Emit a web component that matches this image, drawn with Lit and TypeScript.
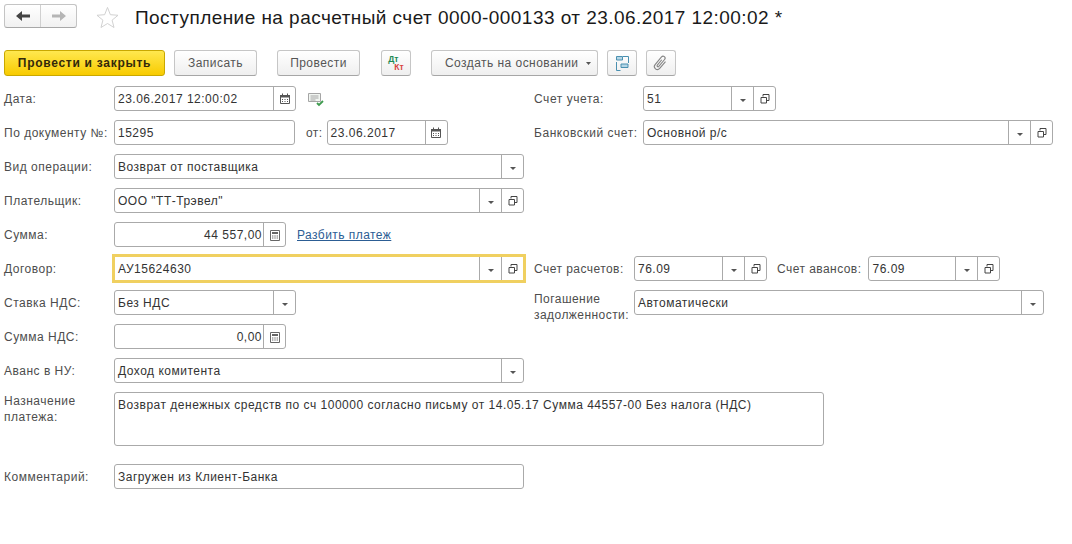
import { LitElement, html, css, svg } from "lit";
import { customElement, property } from "lit/decorators.js";

const ICONS: Record<string, unknown> = {
  drop: svg`<path d="M7 10h6l-3 3z" fill="#555"/>`,
  open: svg`<path d="M8 7.500V5.500h6v6h-2.500M6 8.500h5.500v5.500H6z" fill="none" stroke="#444" stroke-width="1"/>`,
  cal: svg`<path d="M5.500 6.500h9v8h-9z" fill="none" stroke="#555"/><path d="M5 6h10v2.500H5z" fill="#555"/><path d="M7 10h1v1H7zM9.500 10h1v1h-1zM12 10h1v1h-1zM7 12h1v1H7zM9.500 12h1v1h-1zM12 12h1v1h-1z" fill="#555"/><path d="M7 4.500h1v2H7zM12 4.500h1v2h-1z" fill="#555"/>`,
  calc: svg`<path d="M5.500 5.500h9v10h-9z" fill="none" stroke="#666"/><path d="M7 7h6v2H7z" fill="#666"/><path d="M7 10.500h1.400v1H7zM9.300 10.500h1.400v1H9.300zM11.600 10.500H13v1h-1.400zM7 12.600h1.400v1H7zM9.300 12.600h1.400v1H9.300zM11.600 12.600H13v1h-1.400z" fill="#666"/>`,
};

@customElement("form-field")
export class FormField extends LitElement {
  @property() value = "";
  @property({ type: Number }) width = 100;
  @property() buttons = "";
  @property({ type: Boolean }) right = false;
  @property({ type: Boolean }) focused = false;
  @property({ type: Number }) height = 25;

  static styles = css`
    :host { display: block; flex: none; }
    .box {
      box-sizing: border-box;
      display: flex;
      background: #fff;
      border: 1px solid #aaa;
      border-radius: 3px;
      font: 12px/25px "Liberation Sans", Arial, sans-serif;
      letter-spacing: 0.5px;
      color: #333;
    }
    .box.focused {
      border-color: #f0d060;
      box-shadow: 0 0 0 2px #f0d060;
      border-radius: 0;
    }
    .value {
      flex: 1;
      min-width: 0;
      padding: 0 2px 0 3px;
      white-space: nowrap;
      overflow: hidden;
    }
    .value.right { text-align: right; padding-right: 1px; }
    .btn {
      flex: none;
      width: 21px;
      border-left: 1px solid #aaa;
      display: flex;
      align-items: center;
      justify-content: center;
    }
    svg { width: 20px; height: 20px; display: block; }
  `;

  render() {
    const list = this.buttons ? this.buttons.split(",") : [];
    return html`<div
      class="box ${this.focused ? "focused" : ""}"
      style="width:${this.width}px;height:${this.height}px"
    >
      <div class="value ${this.right ? "right" : ""}">${this.value}</div>
      ${list.map(
        (b) => html`<div class="btn"><svg viewBox="0 0 20 20">${ICONS[b]}</svg></div>`
      )}
    </div>`;
  }
}

@customElement("app-root")
export class AppRoot extends LitElement {
  static styles = css`
    :host {
      display: block;
      width: 1072px;
      height: 544px;
      background: #fff;
      overflow: hidden;
      font: 12px/16px "Liberation Sans", Arial, sans-serif;
      letter-spacing: 0.45px;
      color: #4d4d4d;
    }
    .page { padding: 4px 0 0 4px; }
    .head { display: flex; align-items: center; height: 24px; }
    .nav {
      box-sizing: border-box;
      display: flex;
      width: 73px;
      height: 24px;
      border: 1px solid #c4c4c4;
      border-bottom-color: #a8a8a8;
      border-radius: 3px;
      background: linear-gradient(#fff, #f1f1f1);
    }
    .nav > div {
      flex: 1;
      display: flex;
      align-items: center;
      justify-content: center;
    }
    .nav > div + div { border-left: 1px solid #d0d0d0; }
    .star { margin: 2px 0 0 19px; flex: none; display: block; }
    h1 {
      margin: 4px 0 0 16px;
      font: 400 19px/24px "Liberation Sans", Arial, sans-serif;
      letter-spacing: 0.45px;
      color: #1a1a1a;
      white-space: nowrap;
    }
    .bar { display: flex; height: 26px; margin: 22px 0 10px; }
    .b {
      box-sizing: border-box;
      height: 26px;
      flex: none;
      display: flex;
      align-items: center;
      justify-content: center;
      border: 1px solid #c6c6c6;
      border-bottom-color: #a6a6a6;
      border-radius: 3px;
      background: linear-gradient(#fff, #efefef);
      color: #555;
    }
    .b.primary {
      width: 161px;
      background: linear-gradient(#ffe84f, #f8cb00);
      border-color: #c9a800;
      color: #33290a;
      font-weight: 700;
      letter-spacing: 0.72px;
    }
    .b.save { width: 83px; margin-left: 9px; }
    .b.post { width: 83px; margin-left: 20px; }
    .b.dtkt { width: 30px; margin-left: 21px; }
    .b.create {
      width: 167px;
      margin-left: 20px;
      gap: 7px;
      justify-content: flex-start;
      padding-left: 13px;
    }
    .b.tree { width: 30px; margin-left: 9px; }
    .b.clip { width: 30px; margin-left: 9px; }
    .dk {
      display: flex;
      flex-direction: column;
      font: 700 8.5px/8px "Liberation Sans", Arial, sans-serif;
      letter-spacing: 0;
    }
    .dk .d { color: #1d8a55; }
    .dk .k { color: #d8433f; margin-left: 6px; }
    .row { display: flex; height: 25px; margin-bottom: 9px; }
    .row.tall { height: 54px; margin-bottom: 18px; }
    .left { display: flex; align-items: center; width: 530px; flex: none; }
    .tall .left { width: auto; align-items: flex-start; }
    .rgt { display: flex; align-items: center; flex: none; }
    .lab { width: 110px; flex: none; white-space: nowrap; letter-spacing: 0.5px; }
    .rlab { width: 109px; flex: none; white-space: nowrap; letter-spacing: 0.56px; }
    .rlab2 { width: 100px; flex: none; white-space: nowrap; }
    .wrap { white-space: normal; }
    .tall .lab { padding-top: 1px; }
    .pay { margin-top: 8px; }
    .of { margin: 0 4px 0 11px; }
    .glab { margin: 0 7px 0 10px; }
    a {
      margin-left: 11px;
      color: #2c5d94;
      text-decoration: underline;
    }
    .note { display: block; margin: 3px 0 0 11px; }
  `;

  render() {
    return html`<div class="page">
      <div class="head">
        <div class="nav">
          <div>
            <svg width="16" height="12" viewBox="0 0 16 12"><path d="M1 6l6-5v3.500h8v3H7V11z" fill="#444"/></svg>
          </div>
          <div>
            <svg width="16" height="12" viewBox="0 0 16 12"><path d="M15 6L9 1v3.500H1v3h8V11z" fill="#b5b5b5"/></svg>
          </div>
        </div>
        <svg class="star" width="23" height="22" viewBox="0 0 24 23">
          <path d="M12 1.500l3 7.600 8 .6-6.200 5.100 2 7.700-6.800-4.200-6.800 4.200 2-7.700L1 9.700l8-.6z" fill="#fff" stroke="#cfcfcf"/>
        </svg>
        <h1>Поступление на расчетный счет 0000-000133 от 23.06.2017 12:00:02 *</h1>
      </div>

      <div class="bar">
        <div class="b primary">Провести и закрыть</div>
        <div class="b save">Записать</div>
        <div class="b post">Провести</div>
        <div class="b dtkt"><div class="dk"><span class="d">Дт</span><span class="k">Кт</span></div></div>
        <div class="b create">
          <span>Создать на основании</span>
          <svg width="5" height="3" viewBox="0 0 5 3"><path d="M0 0h5L2.500 3z" fill="#555"/></svg>
        </div>
        <div class="b tree">
          <svg width="20" height="20" viewBox="0 0 20 20">
            <path d="M4.500 9v8.500h4M11 3.500h5.500V10" fill="none" stroke="#4a90b0"/>
            <path d="M4.500 3.500h6v3.500h-6zM9 11h7v3.500H9z" fill="#b5d6e6" stroke="#4a90b0"/>
          </svg>
        </div>
        <div class="b clip">
          <svg width="18" height="18" viewBox="0 0 18 18">
            <g transform="rotate(40 9 9)">
              <path d="M11.500 5v9a3 3 0 0 1-6 0V4a2 2 0 0 1 4 0v9a1 1 0 0 1-2 0V6" fill="none" stroke="#858585" stroke-width="1.100"/>
            </g>
          </svg>
        </div>
      </div>

      <div class="row">
        <div class="left">
          <div class="lab">Дата:</div>
          <form-field .width=${182} value="23.06.2017 12:00:02" buttons="cal"></form-field>
          <svg class="note" width="18" height="16" viewBox="0 0 18 16">
            <path d="M1.500 1.500h12v8h-12z" fill="#f1f5f1" stroke="#a5a5a5"/>
            <path d="M3.500 4h8M3.500 6h8M3.500 8h5" stroke="#a5a5a5"/>
            <path d="M10 11l2 2 4-4" fill="none" stroke="#3f9b4f" stroke-width="1.800"/>
          </svg>
        </div>
        <div class="rgt">
          <div class="rlab">Счет учета:</div>
          <form-field .width=${133} value="51" buttons="drop,open"></form-field>
        </div>
      </div>

      <div class="row">
        <div class="left">
          <div class="lab">По документу №:</div>
          <form-field .width=${181} value="15295"></form-field>
          <span class="of">от:</span>
          <form-field .width=${121} value="23.06.2017" buttons="cal"></form-field>
        </div>
        <div class="rgt">
          <div class="rlab">Банковский счет:</div>
          <form-field .width=${410} value="Основной р/с" buttons="drop,open"></form-field>
        </div>
      </div>

      <div class="row">
        <div class="left">
          <div class="lab">Вид операции:</div>
          <form-field .width=${410} value="Возврат от поставщика" buttons="drop"></form-field>
        </div>
      </div>

      <div class="row">
        <div class="left">
          <div class="lab">Плательщик:</div>
          <form-field .width=${410} value='ООО "ТТ-Трэвел"' buttons="drop,open"></form-field>
        </div>
      </div>

      <div class="row">
        <div class="left">
          <div class="lab">Сумма:</div>
          <form-field .width=${172} value="44 557,00" right buttons="calc"></form-field>
          <a href="#">Разбить платеж</a>
        </div>
      </div>

      <div class="row">
        <div class="left">
          <div class="lab">Договор:</div>
          <form-field .width=${410} value="АУ15624630" focused buttons="drop,open"></form-field>
        </div>
        <div class="rgt">
          <div class="rlab2">Счет расчетов:</div>
          <form-field .width=${133} value="76.09" buttons="drop,open"></form-field>
          <span class="glab">Счет авансов:</span>
          <form-field .width=${132} value="76.09" buttons="drop,open"></form-field>
        </div>
      </div>

      <div class="row">
        <div class="left">
          <div class="lab">Ставка НДС:</div>
          <form-field .width=${182} value="Без НДС" buttons="drop"></form-field>
        </div>
        <div class="rgt">
          <div class="rlab2 wrap pay">Погашение задолженности:</div>
          <form-field .width=${410} value="Автоматически" buttons="drop"></form-field>
        </div>
      </div>

      <div class="row">
        <div class="left">
          <div class="lab">Сумма НДС:</div>
          <form-field .width=${172} value="0,00" right buttons="calc"></form-field>
        </div>
      </div>

      <div class="row">
        <div class="left">
          <div class="lab">Аванс в НУ:</div>
          <form-field .width=${410} value="Доход комитента" buttons="drop"></form-field>
        </div>
      </div>

      <div class="row tall">
        <div class="left">
          <div class="lab">Назначение<br />платежа:</div>
          <form-field
            .width=${710}
            .height=${54}
            value="Возврат денежных средств по сч 100000 согласно письму от 14.05.17 Сумма 44557-00 Без налога (НДС)"
          ></form-field>
        </div>
      </div>

      <div class="row">
        <div class="left">
          <div class="lab">Комментарий:</div>
          <form-field .width=${410} value="Загружен из Клиент-Банка"></form-field>
        </div>
      </div>
    </div>`;
  }
}
